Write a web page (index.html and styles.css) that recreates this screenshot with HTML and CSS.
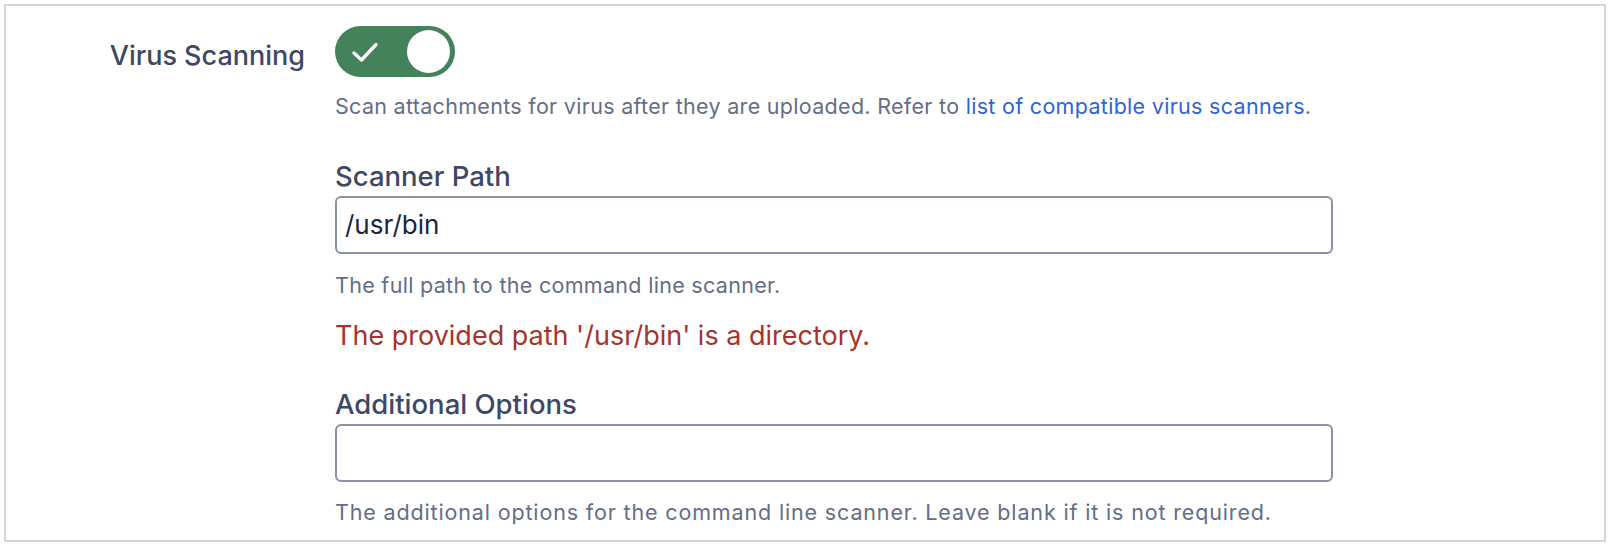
FILE: index.html
```html
<!DOCTYPE html>
<html lang="en">
<head>
<meta charset="utf-8">
<title>Virus Scanning</title>
<link rel="stylesheet" href="styles.css">
</head>
<body>
<div class="frame">
  <div class="row">
    <div class="row-label">Virus Scanning</div>
    <div class="row-content">
      <div class="toggle" role="switch" aria-checked="true">
        <svg class="toggle-check" width="28" height="22" viewBox="0 0 28 22" aria-hidden="true">
          <path d="M3 12 L10.5 19 L25 3.5" fill="none" stroke="#ffffff" stroke-width="3.4" stroke-linecap="round" stroke-linejoin="round"/>
        </svg>
        <span class="toggle-knob"></span>
      </div>
      <p class="desc first">Scan attachments for virus after they are uploaded. Refer to <a class="link" href="#">list of compatible virus scanners</a>.</p>

      <div class="field">
        <label class="field-label">Scanner Path</label>
        <div class="input">/usr/bin</div>
        <p class="desc help">The full path to the command line scanner.</p>
        <p class="error">The provided path '/usr/bin' is a directory.</p>
      </div>

      <div class="field second">
        <label class="field-label">Additional Options</label>
        <div class="input"></div>
        <p class="desc help2">The additional options for the command line scanner. Leave blank if it is not required.</p>
      </div>
    </div>
  </div>
</div>
</body>
</html>
```
FILE: styles.css
```css
* { box-sizing: border-box; }
html, body { margin: 0; padding: 0; background: #ffffff; }
body {
  padding: 4px;
  font-family: Inter, "Noto Sans", "Liberation Sans", sans-serif;
}
.frame {
  border: 2px solid #d5d6de;
  height: 538px;
  padding-top: 20px;
}
.row {
  display: grid;
  grid-template-columns: 299px 1fr;
  column-gap: 30px;
}
.row-label {
  text-align: right;
  font-size: 27px;
  font-weight: 500;
  color: #3d4865;
  height: 51px;
  line-height: 59px;
}
.row-content { min-width: 0; }
.toggle {
  width: 120px;
  height: 51px;
  border-radius: 26px;
  background: #44825c;
  display: flex;
  align-items: center;
  justify-content: space-between;
  padding: 0 5px 0 16px;
}
.toggle-check { display: block; }
.toggle-knob {
  width: 43px;
  height: 43px;
  border-radius: 50%;
  background: #ffffff;
}
.desc {
  margin: 0;
  font-size: 21.5px;
  letter-spacing: 0.3px;
  line-height: 27px;
  color: #646e86;
}
.desc.first { margin-top: 16px; }
.link { color: #2f63d8; text-decoration: none; }
.field { margin-top: 40px; }
.field.second { margin-top: 36px; }
.field-label {
  display: block;
  font-size: 27.5px;
  font-weight: 500;
  line-height: 32px;
  color: #3d4865;
}
.input {
  margin-top: 4px;
  width: 998px;
  height: 58px;
  border: 2px solid #8a92a4;
  border-radius: 6px;
  padding: 0 8px;
  font-size: 26px;
  line-height: 54px;
  color: #1b2441;
}
.help { margin-top: 18px; }
.help2 { margin-top: 17px; letter-spacing: 0.85px; }
.error {
  margin: 21px 0 0;
  font-size: 27px;
  line-height: 32px;
  color: #a7332a;
}
```
